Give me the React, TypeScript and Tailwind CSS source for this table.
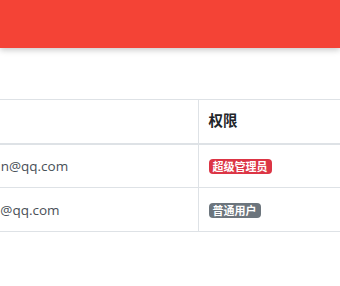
import React from 'react';

type User = { email: string; role: 'admin' | 'user' };

const users: User[] = [
  { email: 'admin@qq.com', role: 'admin' },
  { email: 'test1@qq.com', role: 'user' },
];

const RoleBadge: React.FC<{ role: User['role'] }> = ({ role }) =>
  role === 'admin' ? (
    <span className="inline-block rounded-[4px] bg-[#dc3545] px-[4px] py-[1px] text-[11px] font-bold leading-[13px] text-white">
      超级管理员
    </span>
  ) : (
    <span className="inline-block rounded-[4px] bg-[#6c757d] px-[4px] py-[1px] text-[11px] font-bold leading-[13px] text-white">
      普通用户
    </span>
  );

export default function App() {
  return (
    <div
      className="h-[286px] w-[340px] overflow-hidden bg-white"
      style={{ fontFamily: '"Open Sans", "Noto Sans CJK SC", sans-serif' }}
    >
      <div className="h-12 bg-[#f44336] shadow-[0_2px_6px_rgba(0,0,0,0.22)]" />
      <div className="ml-[-44px] mt-[51px] w-[420px]">
        <table className="w-full border-collapse text-[13.5px] text-[#495057]">
          <thead>
            <tr className="h-[44px] border-t border-b-2 border-[#dee2e6]">
              <th className="w-[242px] border-r border-[#dee2e6]" />
              <th className="pl-[10px] text-left text-[14.5px] font-bold text-[#212529]">权限</th>
            </tr>
          </thead>
          <tbody>
            {users.map((u) => (
              <tr key={u.email} className="h-[44px] border-b border-[#dee2e6]">
                <td className="border-r border-[#dee2e6] pl-[13px] pt-[1px]">{u.email}</td>
                <td className="pl-[10px] pt-[1px]">
                  <RoleBadge role={u.role} />
                </td>
              </tr>
            ))}
          </tbody>
        </table>
      </div>
    </div>
  );
}
